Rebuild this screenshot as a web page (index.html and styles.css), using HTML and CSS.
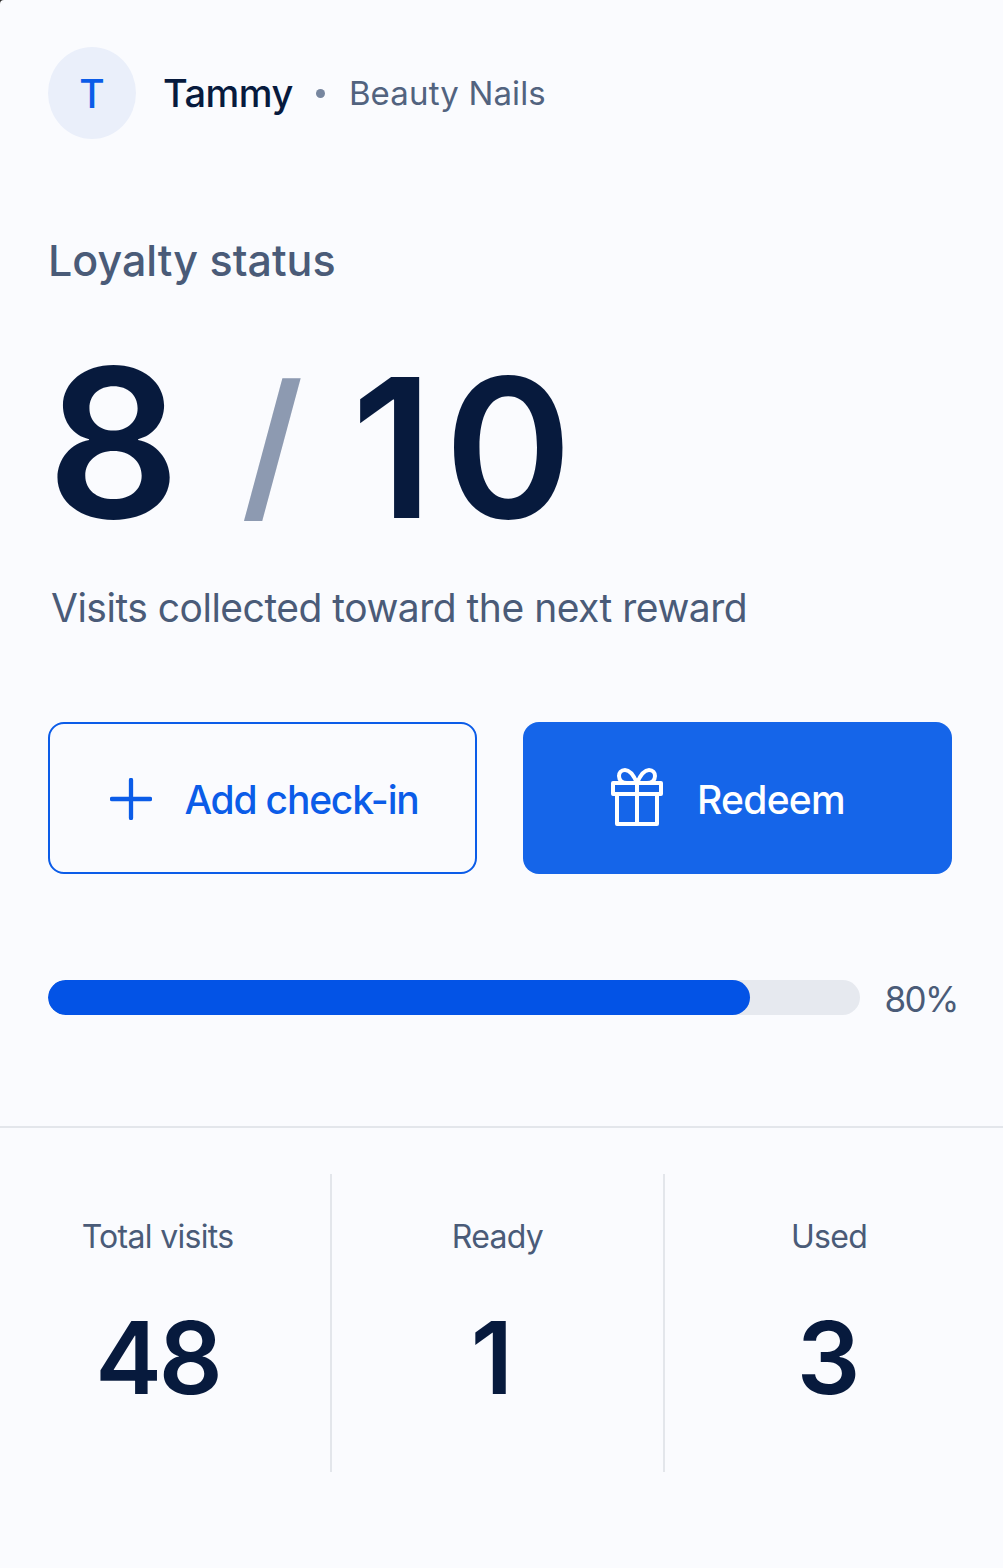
FILE: index.html
```html
<!DOCTYPE html>
<html lang="en">
<head>
  <meta charset="UTF-8">
  <meta name="viewport" content="width=device-width, initial-scale=1.0">
  <title>Loyalty status</title>
  <link rel="stylesheet" href="styles.css">
</head>
<body>
  <div class="card">
    <div class="client">
      <div class="avatar">T</div>
      <span class="client-name">Tammy</span>
      <span class="client-dot"></span>
      <span class="client-shop">Beauty Nails</span>
    </div>

    <h2 class="status-title">Loyalty status</h2>
    <div class="count">
      <span class="count-now">8</span>
      <span class="count-slash">/</span>
      <span class="count-goal">10</span>
    </div>
    <p class="count-note">Visits collected toward the next reward</p>

    <div class="actions">
      <button class="btn btn-outline">
        <svg class="btn-icon" viewBox="0 0 44 44" fill="none" stroke="currentColor" stroke-width="4.5" stroke-linecap="round">
          <path d="M22 2v40M2 22h40"/>
        </svg>
        Add check-in
      </button>
      <button class="btn btn-solid">
        <svg class="btn-icon" viewBox="0 0 52 58" fill="none" stroke="currentColor" stroke-width="4" stroke-linejoin="round">
          <path d="M2 15h48v11H2zM6 26h40v30H6zM26 15v41"/>
          <path d="M26 15c-3-7-7-13-12-13-4 0-6 3-6 6 0 4 3 7 8 7M26 15c3-7 7-13 12-13 4 0 6 3 6 6 0 4-3 7-8 7"/>
        </svg>
        Redeem
      </button>
    </div>

    <div class="progress-row">
      <div class="progress">
        <div class="progress-bar" style="width: 86.4%"></div>
      </div>
      <span class="progress-label">80%</span>
    </div>

    <div class="stats">
      <div class="stat stat-total">
        <div class="stat-label">Total visits</div>
        <div class="stat-value">48</div>
      </div>
      <div class="stat stat-ready">
        <div class="stat-label">Ready</div>
        <div class="stat-value">1</div>
      </div>
      <div class="stat stat-used">
        <div class="stat-label">Used</div>
        <div class="stat-value">3</div>
      </div>
    </div>
  </div>
</body>
</html>
```

FILE: styles.css
```css
html {
  background: #2b2b2b;
}

body {
  margin: 0;
  background: #fafbfe;
  border-top-left-radius: 4px;
  font-family: 'Inter', sans-serif;
  color: #071a3d;
}

.card {
  min-height: 1568px;
  padding-top: 47px;
  box-sizing: border-box;
}

.client {
  display: flex;
  align-items: center;
  padding-left: 48px;
}

.avatar {
  width: 88px;
  height: 92px;
  border-radius: 50%;
  background: #eaeffa;
  color: #0b5ce8;
  font-size: 39px;
  font-weight: 500;
  display: flex;
  justify-content: center;
  align-items: center;
}

.client-name {
  margin-left: 27px;
  font-size: 38px;
  font-weight: 500;
  letter-spacing: -0.5px;
}

.client-dot {
  width: 9px;
  height: 9px;
  border-radius: 50%;
  background: #77869f;
  margin: 0 24px 0 23px;
}

.client-shop {
  font-size: 33px;
  letter-spacing: 0.15px;
  color: #52637f;
}

.status-title {
  margin: 94px 0 0 48px;
  font-size: 43px;
  line-height: 54px;
  font-weight: 500;
  color: #4a5b78;
}

.count {
  margin: 45px 0 0 47px;
  height: 220px;
  display: flex;
  align-items: baseline;
  font-weight: 600;
  line-height: 220px;
}

.count-now {
  font-size: 208px;
}

.count-slash {
  align-self: center;
  padding-top: 4px;
  font-size: 164px;
  line-height: 164px;
  font-weight: 600;
  color: #8d9ab1;
  margin: 0 48px 0 61px;
}

.count-goal {
  font-size: 194px;
  letter-spacing: 11px;
}

.count-note {
  margin: 31px 0 0 51px;
  font-size: 39px;
  line-height: 50px;
  letter-spacing: -0.5px;
  color: #4a5b78;
}

.actions {
  margin: 89px 51px 0 48px;
  display: grid;
  grid-template-columns: 1fr 1fr;
  gap: 46px;
}

.btn {
  height: 152px;
  box-sizing: border-box;
  border-radius: 16px;
  padding: 2px 0 0;
  font-family: inherit;
  font-size: 39px;
  font-weight: 500;
  letter-spacing: -1.2px;
  display: flex;
  justify-content: center;
  align-items: center;
  gap: 32px;
}

.btn-outline {
  background: #fafbfe;
  border: 2px solid #0b5ce8;
  color: #0b5ce8;
  padding-left: 4px;
}

.btn-solid {
  background: #1565e9;
  border: none;
  color: #fff;
  gap: 34px;
  padding-right: 19px;
  letter-spacing: -0.7px;
}

.btn-icon {
  width: 42px;
  height: 42px;
}

.btn-solid .btn-icon {
  width: 52px;
  height: 58px;
  margin-bottom: 4px;
}

.progress-row {
  margin: 100px 45px 0 48px;
  display: flex;
  align-items: center;
  gap: 24px;
}

.progress {
  flex: 1;
  height: 35px;
  border-radius: 18px;
  background: #e6e9ef;
  overflow: hidden;
}

.progress-bar {
  height: 100%;
  background: #0353e6;
  border-radius: 18px;
}

.progress-label {
  padding-top: 4px;
  font-size: 35px;
  letter-spacing: -1.5px;
  color: #4a5b78;
}

.stats {
  margin-top: 106px;
  border-top: 2px solid #e3e6eb;
  padding-top: 46px;
  display: grid;
  grid-template-columns: 332px 333px 1fr;
}

.stat {
  height: 298px;
  text-align: center;
  border-right: 2px solid #e3e6eb;
  box-sizing: border-box;
}

.stat-total {
  padding-right: 15px;
}

.stat-ready .stat-value {
  padding-right: 14px;
}

.stat-used {
  border-right: none;
  padding-right: 10px;
}

.stat-used .stat-value {
  padding-right: 4px;
}

.stat-label {
  margin-top: 43px;
  font-size: 32px;
  line-height: 40px;
  letter-spacing: -0.7px;
  color: #4a5b78;
}

.stat-value {
  margin-top: 41px;
  font-size: 100px;
  line-height: 120px;
  font-weight: 600;
  letter-spacing: -3px;
}
```
